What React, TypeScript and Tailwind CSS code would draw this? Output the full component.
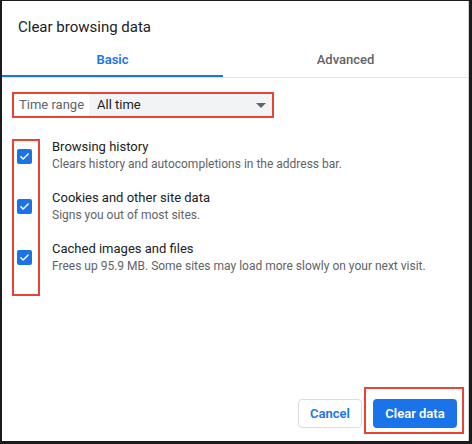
import React from 'react';

const items = [
  { title: 'Browsing history', desc: 'Clears history and autocompletions in the address bar.' },
  { title: 'Cookies and other site data', desc: 'Signs you out of most sites.' },
  { title: 'Cached images and files', desc: 'Frees up 95.9 MB. Some sites may load more slowly on your next visit.' },
];

const CheckBox = () => (
  <div className="w-[15px] h-[15px] rounded-[2px] bg-[#1a73e8] flex items-center justify-center">
    <svg width="11" height="11" viewBox="0 0 24 24" fill="none">
      <path d="M4 12.5l5 5L20 6.5" stroke="#fff" strokeWidth="3.2" strokeLinecap="round" strokeLinejoin="round" />
    </svg>
  </div>
);

export default function App() {
  return (
    <div
      className="w-[472px] h-[444px] bg-white flex flex-col border-l-2 border-t border-r-[3px] border-b-[3px] border-[#1c1c1c] text-[#202124]"
      style={{ fontFamily: 'Roboto, "Liberation Sans", Arial, sans-serif' }}
    >
      <div className="flex-1 flex flex-col border-r border-[#d0d0d0]">
        <h1 className="pt-4 pl-4 text-[15px] leading-5 font-normal text-[#202124]">Clear browsing data</h1>

        <div className="flex border-b border-[#e3e3e3]">
          <div className="w-[221px] h-[40px] pt-[13px] text-center text-[13px] leading-5 font-semibold text-[#1a73e8] border-b-2 border-[#1a73e8] -mb-px">
            Basic
          </div>
          <div className="flex-1 h-[40px] pt-[13px] text-center text-[13px] leading-5 font-medium text-[#5f6368]">
            Advanced
          </div>
        </div>

        <div className="mt-[14px] ml-[10px] w-[262px] h-[26px] border-2 border-[#ea4335] flex items-stretch">
          <div className="pl-[5px] w-[75px] flex items-center text-[13px] text-[#5f6368]">Time range</div>
          <div className="flex-1 bg-[#f1f3f4] flex items-center justify-between pl-2 pr-[6px] text-[13px] text-[#202124]">
            <span>All time</span>
            <svg width="10" height="5" viewBox="0 0 10 5">
              <path d="M0 0h10L5 5z" fill="#5f6368" />
            </svg>
          </div>
        </div>

        <div className="mt-[21px] ml-[10px] flex">
          <div className="w-[28px] border-2 border-[#ea4335] pl-[3px]">
            {items.map((it) => (
              <div key={it.title} className="h-[51px] pt-[7px] first:pt-[8px]">
                <CheckBox />
              </div>
            ))}
          </div>
          <div className="ml-3 flex flex-col">
            {items.map((it) => (
              <div key={it.title} className="h-[51px]">
                <div className="text-[13px] leading-4 text-[#202124]">{it.title}</div>
                <div className="text-[12px] leading-[19px] text-[#5f6368]">{it.desc}</div>
              </div>
            ))}
          </div>
        </div>

        <div className="mt-auto flex justify-end items-end pr-[4px] pb-[7px]">
          <button className="mb-[6px] mr-[2px] h-[29px] w-[64px] rounded border border-[#dadce0] bg-white text-[13px] font-semibold text-[#1a73e8]">
            Cancel
          </button>
          <div className="border-2 border-[#ea4335] pt-[10px] pb-[4px] pl-[7px] pr-[5px]">
            <button className="h-[29px] w-[84px] rounded bg-[#1a73e8] text-[13px] font-semibold text-white">
              Clear data
            </button>
          </div>
        </div>
      </div>
    </div>
  );
}
